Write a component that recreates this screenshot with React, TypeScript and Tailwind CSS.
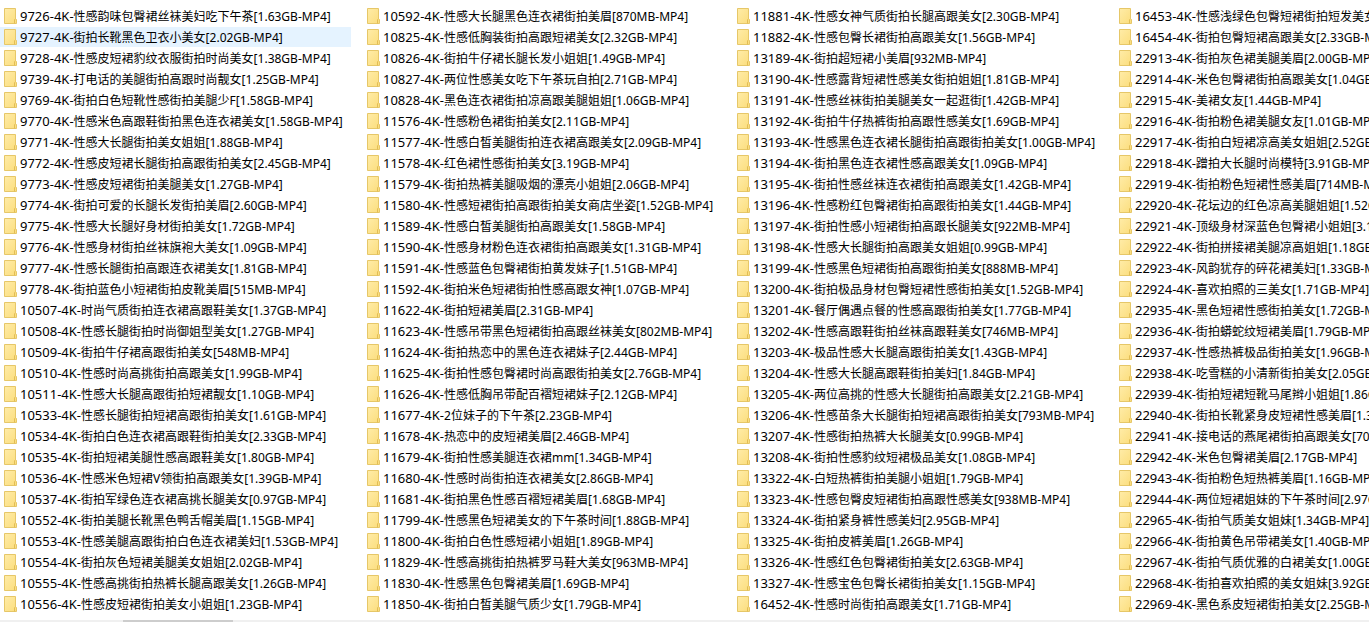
// ============================================================================
// Folder List - Multi-column list view of a directory
// ============================================================================

import React, { useState } from 'react';

const COLUMNS = [
    {
        width: 'w-[351px]',
        folders: [
            '9726-4K-性感韵味包臀裙丝袜美妇吃下午茶[1.63GB-MP4]',
            '9727-4K-街拍长靴黑色卫衣小美女[2.02GB-MP4]',
            '9728-4K-性感皮短裙豹纹衣服街拍时尚美女[1.38GB-MP4]',
            '9739-4K-打电话的美腿街拍高跟时尚靓女[1.25GB-MP4]',
            '9769-4K-街拍白色短靴性感街拍美腿少F[1.58GB-MP4]',
            '9770-4K-性感米色高跟鞋街拍黑色连衣裙美女[1.58GB-MP4]',
            '9771-4K-性感大长腿街拍美女姐姐[1.88GB-MP4]',
            '9772-4K-性感皮短裙长腿街拍高跟街拍美女[2.45GB-MP4]',
            '9773-4K-性感皮短裙街拍美腿美女[1.27GB-MP4]',
            '9774-4K-街拍可爱的长腿长发街拍美眉[2.60GB-MP4]',
            '9775-4K-性感大长腿好身材街拍美女[1.72GB-MP4]',
            '9776-4K-性感身材街拍丝袜旗袍大美女[1.09GB-MP4]',
            '9777-4K-性感长腿街拍高跟连衣裙美女[1.81GB-MP4]',
            '9778-4K-街拍蓝色小短裙街拍皮靴美眉[515MB-MP4]',
            '10507-4K-时尚气质街拍连衣裙高跟鞋美女[1.37GB-MP4]',
            '10508-4K-性感长腿街拍时尚御姐型美女[1.27GB-MP4]',
            '10509-4K-街拍牛仔裙高跟街拍美女[548MB-MP4]',
            '10510-4K-性感时尚高挑街拍高跟美女[1.99GB-MP4]',
            '10511-4K-性感大长腿高跟街拍短裙靓女[1.10GB-MP4]',
            '10533-4K-性感长腿街拍短裙高跟街拍美女[1.61GB-MP4]',
            '10534-4K-街拍白色连衣裙高跟鞋街拍美女[2.33GB-MP4]',
            '10535-4K-街拍短裙美腿性感高跟鞋美女[1.80GB-MP4]',
            '10536-4K-性感米色短裙V领街拍高跟美女[1.39GB-MP4]',
            '10537-4K-街拍军绿色连衣裙高挑长腿美女[0.97GB-MP4]',
            '10552-4K-街拍美腿长靴黑色鸭舌帽美眉[1.15GB-MP4]',
            '10553-4K-性感美腿高跟街拍白色连衣裙美妇[1.53GB-MP4]',
            '10554-4K-街拍灰色短裙美腿美女姐姐[2.02GB-MP4]',
            '10555-4K-性感高挑街拍热裤长腿高跟美女[1.26GB-MP4]',
            '10556-4K-性感皮短裙街拍美女小姐姐[1.23GB-MP4]',
        ]
    },
    {
        width: 'w-[358px]',
        folders: [
            '10592-4K-性感大长腿黑色连衣裙街拍美眉[870MB-MP4]',
            '10825-4K-性感低胸装街拍高跟短裙美女[2.32GB-MP4]',
            '10826-4K-街拍牛仔裙长腿长发小姐姐[1.49GB-MP4]',
            '10827-4K-两位性感美女吃下午茶玩自拍[2.71GB-MP4]',
            '10828-4K-黑色连衣裙街拍凉高跟美腿姐姐[1.06GB-MP4]',
            '11576-4K-性感粉色裙街拍美女[2.11GB-MP4]',
            '11577-4K-性感白皙美腿街拍连衣裙高跟美女[2.09GB-MP4]',
            '11578-4K-红色裙性感街拍美女[3.19GB-MP4]',
            '11579-4K-街拍热裤美腿吸烟的漂亮小姐姐[2.06GB-MP4]',
            '11580-4K-性感短裙街拍高跟街拍美女商店坐姿[1.52GB-MP4]',
            '11589-4K-性感白皙美腿街拍高跟美女[1.58GB-MP4]',
            '11590-4K-性感身材粉色连衣裙街拍高跟美女[1.31GB-MP4]',
            '11591-4K-性感蓝色包臀裙街拍黄发妹子[1.51GB-MP4]',
            '11592-4K-街拍米色短裙街拍性感高跟女神[1.07GB-MP4]',
            '11622-4K-街拍短裙美眉[2.31GB-MP4]',
            '11623-4K-性感吊带黑色短裙街拍高跟丝袜美女[802MB-MP4]',
            '11624-4K-街拍热恋中的黑色连衣裙妹子[2.44GB-MP4]',
            '11625-4K-街拍性感包臀裙时尚高跟街拍美女[2.76GB-MP4]',
            '11626-4K-性感低胸吊带配百褶短裙妹子[2.12GB-MP4]',
            '11677-4K-2位妹子的下午茶[2.23GB-MP4]',
            '11678-4K-热恋中的皮短裙美眉[2.46GB-MP4]',
            '11679-4K-街拍性感美腿连衣裙mm[1.34GB-MP4]',
            '11680-4K-性感时尚街拍连衣裙美女[2.86GB-MP4]',
            '11681-4K-街拍黑色性感百褶短裙美眉[1.68GB-MP4]',
            '11799-4K-性感黑色短裙美女的下午茶时间[1.88GB-MP4]',
            '11800-4K-街拍白色性感短裙小姐姐[1.89GB-MP4]',
            '11829-4K-性感高挑街拍热裤罗马鞋大美女[963MB-MP4]',
            '11830-4K-性感黑色包臀裙美眉[1.69GB-MP4]',
            '11850-4K-街拍白皙美腿气质少女[1.79GB-MP4]',
        ]
    },
    {
        width: 'w-[370px]',
        folders: [
            '11881-4K-性感女神气质街拍长腿高跟美女[2.30GB-MP4]',
            '11882-4K-性感包臀长裙街拍高跟美女[1.56GB-MP4]',
            '13189-4K-街拍超短裙小美眉[932MB-MP4]',
            '13190-4K-性感露背短裙性感美女街拍姐姐[1.81GB-MP4]',
            '13191-4K-性感丝袜街拍美腿美女一起逛街[1.42GB-MP4]',
            '13192-4K-街拍牛仔热裤街拍高跟性感美女[1.69GB-MP4]',
            '13193-4K-性感黑色连衣裙长腿街拍高跟街拍美女[1.00GB-MP4]',
            '13194-4K-街拍黑色连衣裙性感高跟美女[1.09GB-MP4]',
            '13195-4K-街拍性感丝袜连衣裙街拍高跟美女[1.42GB-MP4]',
            '13196-4K-性感粉红包臀裙街拍高跟街拍美女[1.44GB-MP4]',
            '13197-4K-街拍性感小短裙街拍高跟长腿美女[922MB-MP4]',
            '13198-4K-性感大长腿街拍高跟美女姐姐[0.99GB-MP4]',
            '13199-4K-性感黑色短裙街拍高跟街拍美女[888MB-MP4]',
            '13200-4K-街拍极品身材包臀短裙性感街拍美女[1.52GB-MP4]',
            '13201-4K-餐厅偶遇点餐的性感高跟街拍美女[1.77GB-MP4]',
            '13202-4K-性感高跟鞋街拍丝袜高跟鞋美女[746MB-MP4]',
            '13203-4K-极品性感大长腿高跟街拍美女[1.43GB-MP4]',
            '13204-4K-性感大长腿高跟鞋街拍美妇[1.84GB-MP4]',
            '13205-4K-两位高挑的性感大长腿街拍高跟美女[2.21GB-MP4]',
            '13206-4K-性感苗条大长腿街拍短裙高跟街拍美女[793MB-MP4]',
            '13207-4K-性感街拍热裤大长腿美女[0.99GB-MP4]',
            '13208-4K-街拍性感豹纹短裙极品美女[1.08GB-MP4]',
            '13322-4K-白短热裤街拍美腿小姐姐[1.79GB-MP4]',
            '13323-4K-性感包臀皮短裙街拍高跟性感美女[938MB-MP4]',
            '13324-4K-街拍紧身裤性感美妇[2.95GB-MP4]',
            '13325-4K-街拍皮裤美眉[1.26GB-MP4]',
            '13326-4K-性感红色包臀裙街拍美女[2.63GB-MP4]',
            '13327-4K-性感宝色包臀长裙街拍美女[1.15GB-MP4]',
            '16452-4K-性感时尚街拍高跟美女[1.71GB-MP4]',
        ]
    },
    {
        width: 'w-[370px]',
        folders: [
            '16453-4K-性感浅绿色包臀短裙街拍短发美女[1.62GB-MP4]',
            '16454-4K-街拍包臀短裙高跟美女[2.33GB-MP4]',
            '22913-4K-街拍灰色裙美腿美眉[2.00GB-MP4]',
            '22914-4K-米色包臀裙街拍高跟美女[1.04GB-MP4]',
            '22915-4K-美裙女友[1.44GB-MP4]',
            '22916-4K-街拍粉色裙美腿女友[1.01GB-MP4]',
            '22917-4K-街拍白短裙凉高美女姐姐[2.52GB-MP4]',
            '22918-4K-蹭拍大长腿时尚模特[3.91GB-MP4]',
            '22919-4K-街拍粉色短裙性感美眉[714MB-MP4]',
            '22920-4K-花坛边的红色凉高美腿姐姐[1.52GB-MP4]',
            '22921-4K-顶级身材深蓝色包臀裙小姐姐[3.11GB-MP4]',
            '22922-4K-街拍拼接裙美腿凉高姐姐[1.18GB-MP4]',
            '22923-4K-风韵犹存的碎花裙美妇[1.33GB-MP4]',
            '22924-4K-喜欢拍照的三美女[1.71GB-MP4]',
            '22935-4K-黑色短裙性感街拍美女[1.72GB-MP4]',
            '22936-4K-街拍蟒蛇纹短裙美眉[1.79GB-MP4]',
            '22937-4K-性感热裤极品街拍美女[1.96GB-MP4]',
            '22938-4K-吃雪糕的小清新街拍美女[2.05GB-MP4]',
            '22939-4K-街拍短裙短靴马尾辫小姐姐[1.86GB-MP4]',
            '22940-4K-街拍长靴紧身皮短裙性感美眉[1.36GB-MP4]',
            '22941-4K-接电话的燕尾裙街拍高跟美女[705MB-MP4]',
            '22942-4K-米色包臀裙美眉[2.17GB-MP4]',
            '22943-4K-街拍粉色短热裤美眉[1.16GB-MP4]',
            '22944-4K-两位短裙姐妹的下午茶时间[2.97GB-MP4]',
            '22965-4K-街拍气质美女姐妹[1.34GB-MP4]',
            '22966-4K-街拍黄色吊带裙美女[1.40GB-MP4]',
            '22967-4K-街拍气质优雅的白裙美女[1.00GB-MP4]',
            '22968-4K-街拍喜欢拍照的美女姐妹[3.92GB-MP4]',
            '22969-4K-黑色系皮短裙街拍美女[2.25GB-MP4]',
        ]
    }
];

const FolderIcon = () => (
    <svg width="13" height="16" viewBox="0 0 13 16" className="shrink-0" aria-hidden="true">
        <defs>
            <linearGradient id="folder" x1="0" y1="0" x2="1" y2="1">
                <stop offset="0" stopColor="#ffeca8" />
                <stop offset="1" stopColor="#fbdd7c" />
            </linearGradient>
        </defs>
        <path d="M0.5 0.5H11.5V10.5L12.5 11.5V15.5H0.5Z" fill="url(#folder)" stroke="#e6c768" />
        {/* Folded tab */}
        <path d="M10.5 15.5V12L11.5 10.5" fill="none" stroke="#e2bd55" />
    </svg>
);

// Single row
const FolderItem = ({ name, selected, onSelect }) => {
    // "9726-4K-" comes first, the title and size follow
    const split = name.indexOf('4K-') + 3;

    return (
        <li>
            <button
                type="button"
                onClick={onSelect}
                className={`
                    flex items-center gap-[3px] w-full h-5 pl-1 text-left whitespace-nowrap
                    ${selected ? 'bg-[#e5f3ff]' : ''}
                `}
            >
                <FolderIcon />
                <span>
                    <span className="text-[13px]">{name.slice(0, split)}</span>
                    {name.slice(split)}
                </span>
            </button>
        </li>
    );
};

// Main Component
export default function FolderList() {
    const [selected, setSelected] = useState(COLUMNS[0].folders[1]);

    return (
        <div className="h-screen flex flex-col justify-between overflow-hidden bg-white text-black text-[12px] leading-5 font-['Noto_Sans','Noto_Sans_CJK_SC',sans-serif]">
            <main className="flex gap-3 pt-1.5">
                {COLUMNS.map((column, index) => (
                    <ul key={index} className={`flex flex-col gap-px shrink-0 ${column.width}`}>
                        {column.folders.map((name) => (
                            <FolderItem
                                key={name}
                                name={name}
                                selected={selected === name}
                                onSelect={() => setSelected(name)}
                            />
                        ))}
                    </ul>
                ))}
            </main>

            {/* Horizontal scrollbar */}
            <div className="h-0.5 shrink-0 bg-[#f0f0f0]">
                <div className="h-full w-[8%] ml-[9%] bg-[#cdcdcd]" />
            </div>
        </div>
    );
}
